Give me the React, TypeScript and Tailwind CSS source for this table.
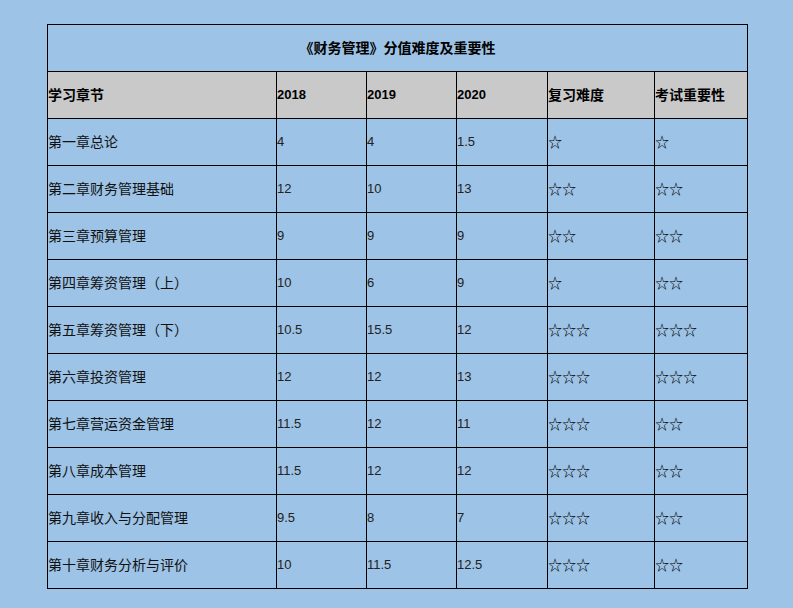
import React from "react";

const rows: [string, string, string, string, string, string][] = [
  ["第一章总论", "4", "4", "1.5", "☆", "☆"],
  ["第二章财务管理基础", "12", "10", "13", "☆☆", "☆☆"],
  ["第三章预算管理", "9", "9", "9", "☆☆", "☆☆"],
  ["第四章筹资管理（上）", "10", "6", "9", "☆", "☆☆"],
  ["第五章筹资管理（下）", "10.5", "15.5", "12", "☆☆☆", "☆☆☆"],
  ["第六章投资管理", "12", "12", "13", "☆☆☆", "☆☆☆"],
  ["第七章营运资金管理", "11.5", "12", "11", "☆☆☆", "☆☆"],
  ["第八章成本管理", "11.5", "12", "12", "☆☆☆", "☆☆"],
  ["第九章收入与分配管理", "9.5", "8", "7", "☆☆☆", "☆☆"],
  ["第十章财务分析与评价", "10", "11.5", "12.5", "☆☆☆", "☆☆"],
];

const font = { fontFamily: '"Liberation Sans", "Noto Sans CJK SC", sans-serif' };

export default function App() {
  const cell = "border-l border-t border-black h-[47px] flex items-center whitespace-nowrap";
  return (
    <div className="w-[793px] h-[608px] bg-[#9dc3e6] pt-[24px] pl-[47px]" style={font}>
      <div className="grid grid-cols-[229px_90px_90px_91px_107px_93px] w-[701px] border-r border-b border-black text-[#111]">
        <div className="col-span-6 border-l border-t border-black h-[47px] flex items-center justify-center font-bold text-[14px] text-black">
          《财务管理》分值难度及重要性
        </div>
        {["学习章节", "2018", "2019", "2020", "复习难度", "考试重要性"].map((h, i) => (
          <div
            key={h}
            className={`${cell} bg-[#c9c9c9] font-bold text-black ${i >= 1 && i <= 3 ? "text-[13px]" : "text-[14px]"}`}
          >
            {h}
          </div>
        ))}
        {rows.map((r) =>
          r.map((c, i) => (
            <div
              key={r[0] + i}
              className={`${cell} ${i >= 1 && i <= 3 ? "text-[13px] text-[#222]" : i >= 4 ? "text-[14px] text-black" : "text-[14px]"}`}
            >
              {c}
            </div>
          ))
        )}
      </div>
    </div>
  );
}
